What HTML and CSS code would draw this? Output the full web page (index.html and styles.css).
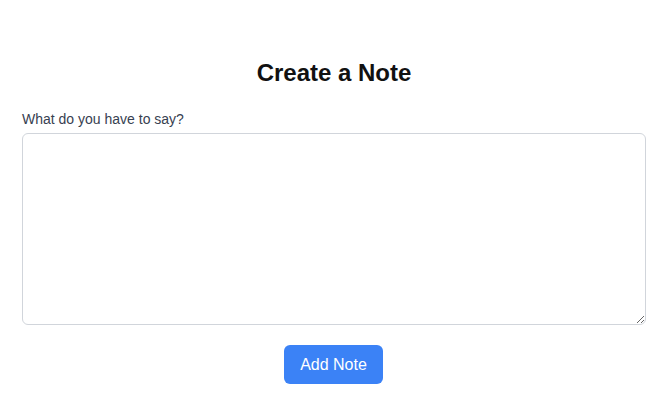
FILE: index.html
```html
<!DOCTYPE html>
<html lang="en">
<head>
<meta charset="utf-8">
<title>Create a Note</title>
<link rel="stylesheet" href="styles.css">
</head>
<body>
<main class="page">
  <h1 class="title">Create a Note</h1>
  <form class="note-form">
    <label class="label" for="note">What do you have to say?</label>
    <textarea id="note" class="textarea"></textarea>
    <div class="actions">
      <button type="button" class="btn">Add Note</button>
    </div>
  </form>
</main>
</body>
</html>
```
FILE: styles.css
```css
* { box-sizing: border-box; }
html, body { margin: 0; background: #fff; }
body { font-family: "Liberation Sans", Arial, sans-serif; color: #111827; }
.page {
  padding: 57px 17px 0 22px;
}
.title {
  margin: 0 0 20px;
  font-size: 24px;
  line-height: 32px;
  font-weight: 700;
  text-align: center;
  color: #111;
}
.note-form { display: flex; flex-direction: column; }
.label {
  font-size: 14px;
  line-height: 20px;
  color: #374151;
  margin-bottom: 4px;
}
.textarea {
  width: 100%;
  height: 192px;
  border: 1px solid #d1d5db;
  border-radius: 6px;
  padding: 8px;
  font: inherit;
  resize: vertical;
  background: #fff;
}
.actions {
  display: flex;
  justify-content: center;
  margin-top: 20px;
  padding-right: 1px;
}
.btn {
  width: 99px;
  height: 39px;
  border: none;
  border-radius: 6px;
  background: #3b82f6;
  color: #fff;
  font-family: "Liberation Sans", Arial, sans-serif;
  font-size: 16px;
  cursor: pointer;
}
```
